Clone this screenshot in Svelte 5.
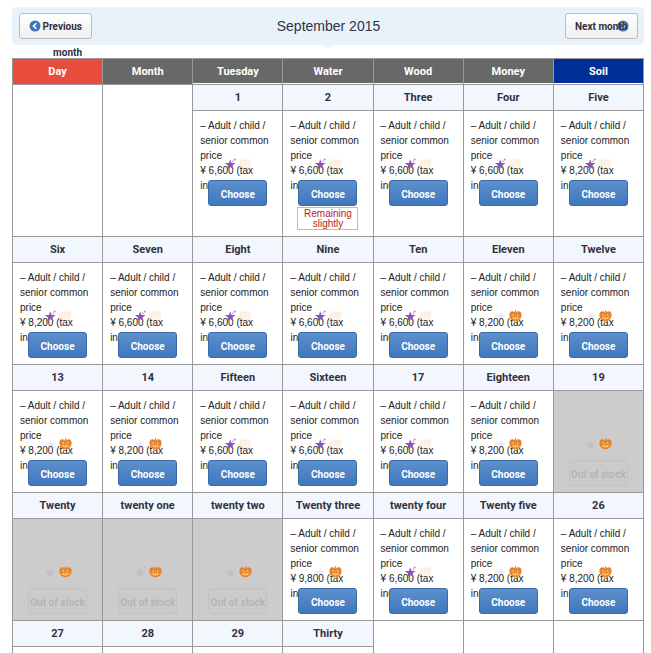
<script lang="ts">
	type Day = {
		label: string;
		price?: string;
		event?: 'star' | 'pumpkin';
		soldOut?: boolean;
		few?: boolean;
	};

	const weekdays = ['Day', 'Month', 'Tuesday', 'Water', 'Wood', 'Money', 'Soil'];

	const star = (label: string, price = '6,600'): Day => ({ label, price, event: 'star' });
	const pumpkin = (label: string, price = '8,200'): Day => ({ label, price, event: 'pumpkin' });
	const soldOut = (label: string): Day => ({ label, event: 'pumpkin', soldOut: true });

	const weeks: (Day | null)[][] = [
		[null, null, star('1'), { ...star('2'), few: true }, star('Three'), star('Four'), star('Five', '8,200')],
		[star('Six', '8,200'), star('Seven'), star('Eight'), star('Nine'), star('Ten'), pumpkin('Eleven'), pumpkin('Twelve')],
		[pumpkin('13'), pumpkin('14'), star('Fifteen'), star('Sixteen'), star('17'), pumpkin('Eighteen'), soldOut('19')],
		[
			soldOut('Twenty'),
			soldOut('twenty one'),
			soldOut('twenty two'),
			pumpkin('Twenty three', '9,800'),
			star('twenty four'),
			pumpkin('Twenty five'),
			pumpkin('26')
		],
		[{ label: '27' }, { label: '28' }, { label: '29' }, { label: 'Thirty' }, null, null, null]
	];
</script>

<main class="page">
	<header class="month-bar">
		<button type="button" class="nav prev">
			<svg class="nav-icon" width="12" height="12" viewBox="0 0 12 12" fill="none" aria-hidden="true">
				<circle cx="6" cy="6" r="5.5" fill="#3b77b9" />
				<path d="M7.3 3.2L4.5 6l2.8 2.8" stroke="#fff" stroke-width="1.6" />
			</svg>
			<span class="nav-text">Previous month</span>
		</button>
		<h1>September 2015</h1>
		<button type="button" class="nav next">
			<svg class="nav-icon" width="12" height="12" viewBox="0 0 12 12" fill="none" aria-hidden="true">
				<circle cx="6" cy="6" r="5.5" fill="#3b77b9" />
				<path d="M4.7 3.2L7.5 6 4.7 8.8" stroke="#fff" stroke-width="1.6" />
			</svg>
			<span class="nav-text">Next month</span>
		</button>
	</header>

	<table>
		<thead>
			<tr>
				{#each weekdays as name, i}
					<th scope="col" class:sunday={i === 0} class:saturday={i === 6} class:lined={i > 1}>{name}</th>
				{/each}
			</tr>
		</thead>
		<tbody>
			{#each weeks as week}
				<tr>
					{#each week as day}
						{#if day}
							<td class="date">{day.label}</td>
						{:else}
							<td rowspan="2"></td>
						{/if}
					{/each}
				</tr>
				<tr>
					{#each week as day}
						{#if day}
							<td class="offer" class:sold-out={day.soldOut}>
								<p class="price">
									{#if day.price}
										– Adult / child / senior common price<br />¥ {day.price} (tax<br />inc
									{/if}
								</p>
								{#if day.event}
									<div class="events">
										<svg class:faded={day.event !== 'star'} width="13" height="13" viewBox="0 0 13 13" aria-hidden="true">
											<path fill="#8e55b0" d="M6.2 1.200l1.300 3.700 4 .1-3.100 2.400 1.100 3.900-3.300-2.200-3.300 2.200 1.100-3.900L.9 5l4-.1z" />
											<circle cx="10.7" cy="1.6" r="1" fill="#b58acb" />
											<circle cx="9" cy="3.3" r=".7" fill="#a573c0" />
										</svg>
										<svg class:faded={day.event !== 'pumpkin'} width="13" height="13" viewBox="0 0 13 13" aria-hidden="true">
											<path fill="#e8832a" d="M5.7 2.6L6 .3h1.200v2.300c1.200-1.300 2.800-1.600 4-.8 1.900 1.300 1.800 4.700.4 6.800-1 1.600-2.900 2.700-5.100 2.700s-4.100-1.100-5.100-2.700C0 6.500-.1 3.100 1.800 1.800c1.200-.8 2.700-.5 3.900.8z" />
											<path fill="#ffd9ab" d="M2.8 5.300l1.900-1.400.6 1.700zM10.200 5.300L8.300 3.900l-.6 1.700zM6.500 5.200l.6 1H5.900zM2.600 7.100l1.300.6.7-.6.9.8 1-.8 1 .8.9-.8.7.6 1.300-.6c-.5 1.500-1.900 2.500-3.900 2.500s-3.400-1-3.900-2.500z" />
											<path fill="#e8832a" d="M4.300 8.700l1-.5 1.200.5 1.200-.5 1 .5-2.200.4z" />
										</svg>
									</div>
									<button type="button" class="choose" disabled={day.soldOut}>
										{day.soldOut ? 'Out of stock' : 'Choose'}
									</button>
								{/if}
								{#if day.few}
									<p class="few">Remaining slightly</p>
								{/if}
							</td>
						{/if}
					{/each}
				</tr>
			{/each}
		</tbody>
	</table>
</main>

<style>
	:global(body) {
		background: #fff;
	}

	.page {
		box-sizing: border-box;
		height: 100vh;
		overflow: hidden;
		padding: 7px 7px 0 12px;
		font-family: 'Liberation Sans', Arial, sans-serif;
		font-size: 10px;
		color: #222;
	}

	.month-bar {
		position: relative;
		display: flex;
		align-items: flex-start;
		justify-content: space-between;
		box-sizing: border-box;
		height: 38px;
		margin-bottom: 13px;
		padding: 6px 6px 6px 7px;
		border-radius: 5px;
		background: #e7f2fb;
	}

	.month-bar::after {
		content: '';
		position: absolute;
		top: 100%;
		left: 50%;
		margin-left: -5px;
		border: 5px solid transparent;
		border-top: 4px solid #e7f2fb;
		border-bottom: 0;
	}

	h1 {
		margin: 0;
		font-size: 14px;
		font-weight: 400;
		line-height: 26px;
		color: #333344;
	}

	.nav {
		position: relative;
		box-sizing: border-box;
		width: 73px;
		height: 26px;
		padding: 0 9px;
		border: 1px solid #bbb;
		border-radius: 3px;
		background: linear-gradient(#fff, #efefef);
		font-family: Roboto, Arial, sans-serif;
		font-size: 10px;
		font-weight: 700;
		line-height: 26px;
		color: #333040;
	}

	.nav-icon {
		position: absolute;
		top: 6px;
		left: 9px;
	}

	.next .nav-icon {
		right: 8px;
		left: auto;
	}

	.nav-text {
		position: relative;
		display: block;
		height: 24px;
		text-align: right;
	}

	.next .nav-text {
		text-align: left;
		white-space: nowrap;
	}

	table {
		width: 100%;
		border-collapse: collapse;
		table-layout: fixed;
	}

	th,
	td {
		box-sizing: border-box;
		padding: 0;
		border: 1px solid #999;
	}

	th,
	.date {
		height: 26px;
		font-family: Roboto, Arial, sans-serif;
		font-size: 11px;
		font-weight: 700;
		line-height: 24px;
		text-align: center;
	}

	th {
		background: #686868;
		color: #fff;
	}

	th.lined {
		box-shadow: inset 0 -1px #fff;
	}

	th.sunday {
		background: #e74c3c;
	}

	th.saturday {
		background: #003097;
	}

	.date {
		background: #f2f7fe;
		color: #333040;
	}

	.offer {
		height: 102px;
		padding: 7px 7px 6px;
		vertical-align: top;
	}

	.sold-out {
		background: #ccc;
	}

	.price {
		height: 40px;
		margin: 0;
		line-height: 15px;
	}

	.events {
		position: relative;
		display: flex;
		justify-content: center;
		gap: 2px;
		height: 13px;
		margin-bottom: 9px;
	}

	.faded {
		opacity: 0.12;
	}

	.choose {
		position: relative;
		display: block;
		box-sizing: border-box;
		width: 59px;
		height: 26px;
		margin: 0 auto;
		padding: 2px 0 0;
		border: 1px solid #3a6ba8;
		border-radius: 3px;
		background: linear-gradient(#5c8fcc, #4078bd);
		font-family: Roboto, Arial, sans-serif;
		font-size: 10px;
		font-weight: 700;
		color: #fff;
		white-space: nowrap;
	}

	.choose:disabled {
		border-color: #c2c2c2;
		background: #cbcbcb;
		color: #b5b5b5;
	}

	.few {
		box-sizing: border-box;
		width: 61px;
		margin: 1px auto 0;
		padding-top: 1px;
		border: 1px solid #bbb;
		line-height: 10px;
		text-align: center;
		color: #c11a1a;
	}
</style>
